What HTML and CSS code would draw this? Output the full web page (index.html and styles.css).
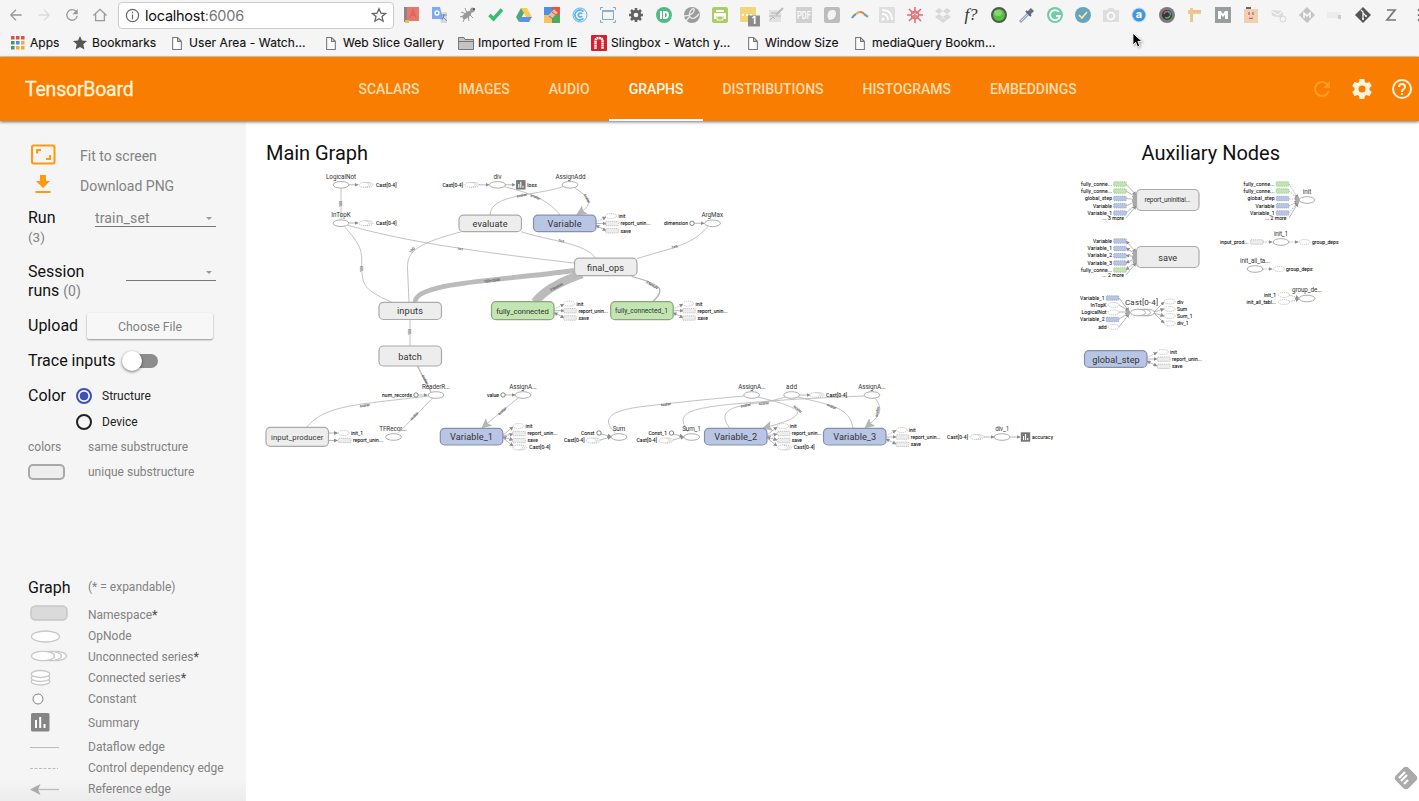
FILE: index.html
```html
<!DOCTYPE html>
<html lang="en">
<head>
<meta charset="utf-8">
<title>TensorBoard</title>
<link rel="stylesheet" href="styles.css">
</head>
<body>
<div class="browser">
  <div class="toolbar">
    <div class="nav-buttons">
      <svg class="nav-icon" viewBox="0 0 16 16"><path d="M14.500 8H2.500M8 2L2 8l6 6"/></svg>
      <svg class="nav-icon faded" viewBox="0 0 16 16"><path d="M1.500 8h12M8 2l6 6-6 6"/></svg>
      <svg class="nav-icon" viewBox="0 0 16 16"><path d="M13 4.500A6 6 0 1 0 14 9"/><path class="solid" d="M14.500 1v6h-6z"/></svg>
      <svg class="nav-icon" viewBox="0 0 16 16"><path d="M.5 8.500L8 1.500l7.500 7M3 7v7.500h10V7"/></svg>
    </div>
    <div class="address">
      <svg class="info" viewBox="0 0 16 16"><circle cx="8" cy="8" r="6.500"/><path d="M8 7v5M8 4v1.700"/></svg>
      <span class="url">localhost<span class="port">:6006</span></span>
      <svg class="star" viewBox="0 0 16 16"><path d="M8 1.700l1.900 4.400 4.700.4-3.600 3.100 1.100 4.600L8 11.700l-4.100 2.500L5 9.600 1.400 6.500l4.700-.4z"/></svg>
    </div>
    <div class="extensions">
      <svg viewBox="0 0 16 16"><path fill="#888" d="M0 0h4v15H0z"/><path fill="#e8776c" d="M3 0h12v14H3z"/><path fill="none" stroke="#d9655c" stroke-width="1.500" d="M6 11l3-8 3 8M7 8h4"/><path fill="#e9bf55" d="M1 13h4v3H1z"/></svg>
      <svg viewBox="0 0 16 16"><path fill="#d6d9dd" d="M7 5h8v11H9z"/><path fill="#7eaaf3" d="M0 0h8l3 12H0z"/><circle cx="5" cy="6" r="2" fill="none" stroke="#fff" stroke-width="1.300"/><path stroke="#7b93b4" d="M9 8h6M12 7v2l-2 4M11 10l4 4"/></svg>
      <svg viewBox="0 0 16 16"><g stroke="#999" fill="#9a9a9a"><path d="M1 5l5 2M5 1l2 5M7 5l6 6M0 10l6-2M3 15l3-7M8 8l1 6"/><ellipse cx="7" cy="8" rx="5" ry="2" transform="rotate(-40 7 8)"/><circle cx="12.500" cy="3" r="2"/></g><circle cx="14" cy="2" r="1" fill="#444"/></svg>
      <svg viewBox="0 0 16 16"><path fill="none" stroke="#36bd70" stroke-width="3.500" d="M1.500 8l4 4L14 2.500"/></svg>
      <svg viewBox="0 0 16 16"><path fill="#f5cf55" d="M5 1h6l5 9h-6z"/><path fill="#50a77b" d="M5 1l3 5-5 9-3-5z"/><path fill="#5c92e5" d="M5 10h11l-3 5H3z"/></svg>
      <svg viewBox="0 0 16 16"><path fill="#4f8fe5" d="M0 0h8v8H0z"/><path fill="#e85547" d="M8 0h8v8H8z"/><path fill="#f4c74e" d="M0 8h8v8H0z"/><path fill="#50a85c" d="M8 8h8v8H8z"/><path stroke="#e5bd9c" stroke-width="5" d="M4 12l8-8"/><path stroke="#9b6b55" d="M5 9l4 3M8 5l4 3"/></svg>
      <svg viewBox="0 0 16 16"><g fill="none" stroke="#60b3ed"><circle cx="8" cy="8" r="7" stroke-width="1"/><path stroke-width="1.800" d="M11.500 4.500a5 5 0 1 0 0 7M10 7a2 2 0 1 0 0 2"/></g></svg>
      <svg viewBox="0 0 16 16"><path fill="none" stroke="#7faaca" d="M2.500 4h11v8.500h-11zM.5 3V.500H3M13 .5h2.500V3M.5 13v2.500H3M13 15.500h2.500V13"/><path fill="#8cb2cf" d="M2 3h12v2H2z"/></svg>
      <svg viewBox="0 0 16 16"><g stroke="#626262" fill="none"><circle cx="8" cy="8" r="3.800" stroke-width="3"/><path stroke-width="2.600" d="M8 1v3M8 12v3M1 8h3M12 8h3M3 3l2 2M11 11l2 2M13 3l-2 2M5 11l-2 2"/></g></svg>
      <svg viewBox="0 0 16 16"><circle cx="8" cy="8" r="8" fill="#50bb83"/><path fill="#fff" d="M4 4h2v8H4zM7 4h2q4 0 4 4t-4 4H7z"/><path fill="#50bb83" d="M9 6q2 0 2 2t-2 2z"/></svg>
      <svg viewBox="0 0 16 16"><circle cx="8" cy="8" r="8" fill="#9c9c9c"/><path fill="none" stroke="#eee" stroke-width="1.300" d="M0 9C6 9 11 6 10 2 8 0 4 7 6 10c2 3 6 1 9-3M6 9l-4 5"/></svg>
      <svg viewBox="0 0 16 16"><rect width="16" height="16" rx="2" fill="#a9cf63"/><path fill="#fff" d="M4 3h8v2H4zM2 6h12v6h-2V9H4v3H2z"/><path fill="none" stroke="#fff" d="M5 9h6v4H5z"/></svg>
      <svg viewBox="0 0 16 16" class="with-badge"><rect width="16" height="15" rx="1" fill="#f1d779"/><path fill="#fff" d="M2 7h2v2H2zM6 7h2v2H6zM10 7h2v2h-2z"/><rect x="8" y="8.500" width="12" height="11" fill="#8b8b8b"/><text x="14" y="17.500" class="badge">1</text></svg>
      <svg viewBox="0 0 16 16"><path fill="#e2e2e2" d="M1 3h12v12H1z"/><path fill="none" stroke="#b8b8b8" d="M1 9h12M2 13l3-3 2 2M3 6h8"/><path stroke="#bbb" stroke-width="2" d="M8 8l7-7"/></svg>
      <svg viewBox="0 0 16 16"><rect width="16" height="16" fill="#d0d0d0"/><text x="8" y="12.500" class="pdf" textLength="14" lengthAdjust="spacingAndGlyphs">PDF</text></svg>
      <svg viewBox="0 0 16 16"><rect width="16" height="16" rx="2" fill="#bcbcbc"/><path fill="#f4f4f4" d="M5 4q7-3 7 3-1 6-7 6Q2 9 5 4z"/></svg>
      <svg viewBox="0 0 16 16"><g fill="none" stroke-width="2.200"><path stroke="#5a9fc0" d="M0 11q2-3 4-4"/><path stroke="#eea755" d="M4 7q2-2 4-2"/><path stroke="#df7b6d" d="M8 5q3 0 4 2"/><path stroke="#75aa91" d="M12 7l4 3"/></g></svg>
      <svg viewBox="0 0 16 16"><rect width="16" height="16" rx="1" fill="#dedede"/><g fill="none" stroke="#fff" stroke-width="1.800"><circle cx="4" cy="12" r=".7"/><path d="M3 7q6 0 6 6M3 3q10 0 10 10"/></g></svg>
      <svg viewBox="0 0 16 16"><g stroke="#e76871"><circle cx="8" cy="8" r="4" fill="#e98388"/><path stroke-width="1.500" d="M8 0v4M8 12v4M0 8h4M12 8h4M2 2l3 3M11 11l3 3M14 2l-3 3M5 11l-3 3"/><path stroke="#fff" d="M5 8l3-1 3 1"/></g></svg>
      <svg viewBox="0 0 16 16"><path fill="#d9d9d9" d="M4 1l4 3-4 3-4-3zM12 1l4 3-4 3-4-3zM4 7l4 3-4 3-4-3zM12 7l4 3-4 3-4-3zM8 11l4 2-4 3-4-3z"/></svg>
      <svg viewBox="0 0 16 16"><text x="8" y="13" class="f-mark">f?</text></svg>
      <svg viewBox="0 0 16 16"><circle cx="8" cy="8" r="7" fill="#54bf40" stroke="#555" stroke-width="2"/><ellipse cx="7" cy="6" rx="4" ry="3" fill="#83d770"/></svg>
      <svg viewBox="0 0 16 16"><path stroke="#8ba4d3" stroke-width="3" d="M1 15l8-8"/><path stroke="#ddd" d="M2 14l7-7"/><path stroke="#687184" stroke-width="4.500" d="M9.500 6.500l4-4"/><path stroke="#57617a" stroke-width="1.800" d="M7 4l5 5"/></svg>
      <svg viewBox="0 0 16 16"><circle cx="8" cy="8" r="8" fill="#71cda2"/><path fill="none" stroke="#fff" stroke-width="1.800" d="M12 5a5 5 0 1 0 1 4H9"/></svg>
      <svg viewBox="0 0 16 16"><circle cx="8" cy="8" r="8" fill="#6aa3bd"/><path fill="none" stroke="#f5e9a9" stroke-width="1.700" d="M4 8l3 3 5-6"/></svg>
      <svg viewBox="0 0 16 16"><path fill="#dedede" d="M0 3h4l2-2h4l2 2h4v12H0z"/><circle cx="8" cy="9" r="3.500" fill="none" stroke="#fff" stroke-width="1.600"/></svg>
      <svg viewBox="0 0 16 16"><circle cx="8" cy="8" r="7.500" fill="#c9e0f5"/><circle cx="8" cy="8" r="6.500" fill="#4495dc"/><text x="8" y="11.500" class="a-mark">a</text></svg>
      <svg viewBox="0 0 16 16"><circle cx="8" cy="8" r="8" fill="#7b7b7b"/><circle cx="8" cy="8" r="5" fill="#38343c"/><g fill="none" stroke-width="1.400"><path stroke="#c0626e" d="M5 7q1-3 4-2.500"/><path stroke="#54a0ae" d="M9 4.500q3 1 2.500 4"/><path stroke="#6aae54" d="M11 9q-2 3-5 1.500"/></g></svg>
      <svg viewBox="0 0 16 16"><path fill="#efc796" d="M3 1h3v14H3zM1 3h13v4H1z"/><path stroke="#d9b48c" d="M7 3v2M10 3v2M13 3v2M4 9h2M4 12h2"/></svg>
      <svg viewBox="0 0 16 16"><rect width="16" height="16" fill="#999d9e"/><path fill="#fff" d="M3 4h3l2 3 2-3h3v8h-3V8L8 10 6 8v4H3z"/></svg>
      <svg viewBox="0 0 16 16"><path fill="#f5ceb0" d="M1 2h14v14H1z"/><path fill="#66666e" d="M3 0h5v2H3z"/><path fill="none" stroke="#736262" d="M6 5v3M10 5v3M6 11q2 1 4 0"/></svg>
      <svg viewBox="0 0 16 16"><path fill="#ddd" d="M0 3l12 1v7L1 9z"/><path stroke="#fff" fill="none" d="M0 4l7 4 5-4"/><circle cx="12" cy="12" r="3" fill="#f5f5f5" stroke="#d5d5d5"/></svg>
      <svg viewBox="0 0 16 16"><path fill="#c4c4c4" d="M8 0l8 8-8 8-8-8z"/><path fill="none" stroke="#fff" stroke-width="1.400" d="M5 11V6l3 3 3-3v5"/></svg>
      <svg viewBox="0 0 16 16"><path fill="#ececec" d="M0 5h13v6H0z"/><rect x="11" y="8" width="3" height="4" fill="#ccc"/></svg>
      <svg viewBox="0 0 16 16"><path fill="#555" d="M8 0l8 8-8 8-8-8z"/><path fill="none" stroke="#fff" stroke-width="1.200" d="M6 3l2 2v7M8 6l3 3"/><circle cx="8" cy="12" r="1" fill="#fff"/><circle cx="11" cy="9" r="1" fill="#fff"/></svg>
      <svg viewBox="0 0 16 16"><path fill="none" stroke="#777" stroke-width="1.700" d="M4 3h8L4 13h9"/></svg>
      <svg viewBox="0 0 16 16"><g fill="#777"><circle cx="8" cy="3" r="1.300"/><circle cx="8" cy="8" r="1.300"/><circle cx="8" cy="13" r="1.300"/></g></svg>
    </div>
  </div>
  <div class="bookmarks">
    <span class="bookmark apps"><svg viewBox="0 0 14 14"><path fill="#dd5144" d="M0 0h3.500v3.500H0zM5 0h3.500v3.500H5zM10 0h3.500v3.500H10z"/><path fill="#449866" d="M0 5h3.500v3.500H0zM0 10h3.500v3.500H0z"/><path fill="#4b8bf4" d="M5 5h3.500v3.500H5z"/><path fill="#eeac38" d="M10 5h3.500v3.500H10zM10 10h3.500v3.500H10z"/><path fill="#eeac38" d="M5 10h3.500v3.500H5z"/></svg><b>Apps</b></span>
    <span class="bookmark starred"><svg viewBox="0 0 14 14"><path fill="#555" d="M7 0l2 4.500 5 .5-3.700 3.300 1.100 5.200L7 11l-4.400 2.500 1.100-5.200L0 5l5-.5z"/></svg><b>Bookmarks</b></span>
    <span class="bookmark user"><svg class="page" viewBox="0 0 9 12"><path d="M.5.500H5L8.500 4v7.500h-8zM5 .5V4h3.500"/></svg><b>User Area - Watch...</b></span>
    <span class="bookmark web"><svg class="page" viewBox="0 0 9 12"><path d="M.5.500H5L8.500 4v7.500h-8zM5 .5V4h3.500"/></svg><b>Web Slice Gallery</b></span>
    <span class="bookmark imported"><svg class="folder" viewBox="0 0 16 13"><path d="M.5 12.500V.500H6l1 2h8.500v10zM.5 4.500h15"/></svg><b>Imported From IE</b></span>
    <span class="bookmark sling"><svg class="slingbox" viewBox="0 0 16 16"><rect width="16" height="16" rx="1" fill="#d5202e"/><path fill="none" stroke="#fff" stroke-width="2.500" stroke-dasharray="1.800 .4" d="M4.500 14V6q0-3 3.500-3t3.500 3v8"/></svg><b>Slingbox - Watch y...</b></span>
    <span class="bookmark window"><svg class="page" viewBox="0 0 9 12"><path d="M.5.500H5L8.500 4v7.500h-8zM5 .5V4h3.500"/></svg><b>Window Size</b></span>
    <span class="bookmark media"><svg class="page" viewBox="0 0 9 12"><path d="M.5.500H5L8.500 4v7.500h-8zM5 .5V4h3.500"/></svg><b>mediaQuery Bookm...</b></span>
  </div>
  <svg class="cursor" viewBox="0 0 12 18"><path fill="#000" stroke="#fff" d="M1 1v13l3-3 2 5 2.500-1-2-5H11z"/></svg>
</div>

<header class="header">
  <div class="brand">TensorBoard</div>
  <nav class="tabs">
    <a class="tab">SCALARS</a><a class="tab">IMAGES</a><a class="tab">AUDIO</a><a class="tab active">GRAPHS</a><a class="tab">DISTRIBUTIONS</a><a class="tab">HISTOGRAMS</a><a class="tab">EMBEDDINGS</a>
  </nav>
  <div class="actions">
    <svg class="dim" viewBox="0 0 24 24"><path d="M17.650 6.350A7.960 7.960 0 0 0 12 4a8 8 0 1 0 7.730 10h-2.080A6 6 0 1 1 12 6c1.660 0 3.140.69 4.220 1.780L13 11h7V4z"/></svg>
    <svg viewBox="0 0 24 24"><path d="M19.430 12.980c.04-.32.070-.64.070-.98s-.03-.66-.07-.98l2.110-1.650c.19-.15.240-.42.120-.64l-2-3.460c-.12-.22-.39-.3-.61-.22l-2.490 1c-.52-.4-1.080-.73-1.690-.98l-.38-2.650A.488.488 0 0 0 14 2h-4c-.25 0-.46.180-.49.420l-.38 2.650c-.61.250-1.170.590-1.690.980l-2.490-1c-.23-.09-.49 0-.61.220l-2 3.460c-.13.220-.07.490.120.640l2.110 1.650c-.04.320-.07.650-.07.980s.03.660.070.980l-2.110 1.650c-.19.150-.24.420-.12.640l2 3.460c.12.220.390.300.610.220l2.490-1c.52.400 1.080.730 1.690.980l.38 2.650c.03.240.240.420.490.420h4c.25 0 .46-.18.490-.42l.38-2.650c.61-.25 1.170-.59 1.690-.98l2.490 1c.23.090.490 0 .61-.22l2-3.460c.12-.22.070-.49-.12-.64zM12 15.500A3.500 3.500 0 1 1 12 8.500a3.500 3.500 0 0 1 0 7z"/></svg>
    <svg viewBox="0 0 24 24"><path d="M11 18h2v-2h-2zm1-16a10 10 0 1 0 0 20 10 10 0 0 0 0-20zm0 18a8 8 0 1 1 0-16 8 8 0 0 1 0 16zm0-14a4 4 0 0 0-4 4h2a2 2 0 1 1 4 0c0 2-3 1.750-3 5h2c0-2.250 3-2.500 3-5a4 4 0 0 0-4-4z"/></svg>
  </div>
</header>

<main class="content">
  <aside class="sidebar">
    <div class="tool"><svg viewBox="0 0 26 22"><rect x="2" y="1.500" width="22.500" height="18" rx="1.500"/><path d="M7 9.500V6h4M20 11v4h-4"/></svg><span>Fit to screen</span></div>
    <div class="tool"><svg class="download" viewBox="0 0 26 22"><path d="M10 1h6v6h4L13 14 6 7h4zM5.500 17h15v2h-15z"/></svg><span>Download PNG</span></div>
    <div class="run">
      <div class="label">Run<small>(3)</small></div>
      <div class="select run-select"><span>train_set</span><i></i></div>
    </div>
    <div class="session">
      <div class="label">Session<br>runs <em>(0)</em></div>
      <div class="select session-select"><span></span><i></i></div>
    </div>
    <div class="upload"><span class="label">Upload</span><span class="choose">Choose File</span></div>
    <div class="trace"><span class="label">Trace inputs</span><span class="toggle"></span></div>
    <div class="color">
      <span class="label">Color</span>
      <div class="choices"><div class="choice"><i class="radio on"></i>Structure</div><div class="choice"><i class="radio"></i>Device</div></div>
    </div>
    <div class="substructure"><span class="key">colors</span><span>same substructure</span></div>
    <div class="substructure unique"><span class="key"><i class="swatch"></i></span><span>unique substructure</span></div>
    <div class="legend-title"><span class="label">Graph</span><span>(* = expandable)</span></div>
    <ul class="legend">
      <li><svg viewBox="0 0 60 20"><rect x="3" y="1" width="36" height="14" rx="4.500" fill="#dadada" stroke="#c6c6c6" stroke-width="1.500"/></svg>Namespace<b>*</b></li>
      <li><svg viewBox="0 0 60 20"><ellipse class="shape" cx="17.500" cy="10.500" rx="14" ry="5.500"/></svg>OpNode</li>
      <li><svg viewBox="0 0 60 20"><ellipse class="shape" cx="27" cy="9" rx="11.500" ry="4.700"/><ellipse class="shape" cx="22" cy="9" rx="11.500" ry="4.700"/><ellipse class="shape" cx="15" cy="9" rx="11.500" ry="4.700"/></svg>Unconnected series<b>*</b></li>
      <li><svg viewBox="0 0 60 20"><ellipse class="shape" cx="12.500" cy="13.500" rx="9.300" ry="3.500"/><ellipse class="shape" cx="12.500" cy="10" rx="9.300" ry="3.500"/><ellipse class="shape" cx="12.500" cy="6" rx="9.300" ry="3.500"/></svg>Connected series<b>*</b></li>
      <li><svg viewBox="0 0 60 20"><circle cx="10" cy="10" r="5" fill="#fff" stroke="#858585"/></svg>Constant</li>
      <li class="summary"><svg viewBox="0 0 60 20"><rect x="3" y="0" width="18.500" height="18.500" rx="1.500" fill="#858585"/><path fill="#fff" d="M7 7h2v8H7zM11.200 4h2v11h-2zM15.500 11h2v4h-2z"/></svg>Summary</li>
      <li class="dataflow"><svg viewBox="0 0 60 20"><path class="line" d="M2 10.500h29"/></svg>Dataflow edge</li>
      <li><svg viewBox="0 0 60 20"><path class="line dashed" d="M2 10.500h28"/></svg>Control dependency edge</li>
      <li><svg viewBox="0 0 60 20"><path class="line thick" d="M8 10.500h23"/><path fill="#aaa" d="M2 10.500L12.500 5 10 10.500 12.500 16z"/></svg>Reference edge</li>
    </ul>
  </aside>

  <section class="canvas">
  <svg class="graph" viewBox="246 121 1173 680">
    <defs>
      <marker id="arrow" viewBox="0 0 4 4" refX="3.500" refY="2" markerWidth="4" markerHeight="4" markerUnits="userSpaceOnUse" orient="auto-start-reverse"><path d="M0 0l4 2-4 2z" fill="#8c8c8c"/></marker>
      <marker id="ref" viewBox="0 0 10 10" refX="8" refY="5" markerWidth="10" markerHeight="10" markerUnits="userSpaceOnUse" orient="auto"><path d="M0 0l10 5-10 5 2-5z" fill="#b5b5b5"/></marker>
      <g id="op"><ellipse rx="7.900" ry="3.300"/></g>
      <g id="dot"><circle r="2.200"/></g>
      <g id="a-op"><ellipse rx="5.500" ry="2.500"/></g>
      <g id="a-ns"><rect x="-6.300" y="-2.200" width="12.600" height="4.400" rx=".7"/></g>
      <g id="a-series"><ellipse cx="2" rx="5" ry="2.400"/><ellipse cx="0" rx="5" ry="2.400"/><ellipse cx="-2" rx="5" ry="2.400"/></g>
      <g id="summary"><rect x="-4.700" y="-4.700" width="9.400" height="9.400" fill="#777"/><path d="M-2 3v-4M0 3v-6M2.200 3V1" stroke="#fff" stroke-width="1.100"/></g>
      <g id="outs3"><path d="M0-1.500L10-6.500" stroke-dasharray="1.200 .8" marker-end="url(#arrow)"/><path d="M0 0h10" marker-end="url(#arrow)"/><path d="M0 2l10 5" marker-start="url(#arrow)" marker-end="url(#arrow)"/></g>
    </defs>

    <text class="title" x="266" y="160" textLength="102">Main Graph</text>
    <text class="title" x="1141.500" y="160" textLength="138.500">Auxiliary Nodes</text>

    <g class="edges">
      <path d="M341 188v31"/>
      <path d="M344.300 226.500C357 241 361.700 247 361.700 260C361.700 285 362 289 391.500 302"/>
      <path d="M348 225.300C400 240 460 250 574 263"/>
      <path d="M461.500 231.700C410 245 407.500 255 407.500 268L409 302"/>
      <path d="M504.300 186.700C535 194 550 202 560 215"/>
      <path d="M563 186.700C535 196 490 194 490.300 215"/>
      <path d="M521 231.700C550 241 585 243 595.500 258"/>
      <path d="M708 226.500C692 244 680 246 637 258.500"/>
      <path d="M410 319.500V346"/>
      <path d="M417.500 366L431 392" stroke-width="1.300"/>
      <path d="M306.700 427.300C325 405 355 405 428.500 396"/>
      <path d="M432.700 398L398.300 433"/>
      <path d="M615.500 433C605 423 600 411 647 406C680 402 710 399 744 396"/>
      <path d="M688 432C677 415 680 408 746 403C790 399 820 398 864 396"/>
      <path d="M785 397C758 407 710 401 729.500 428"/>
      <path d="M798 397C833 406 849 407 853 428"/>
      <path stroke-width="1.200" d="M631.700 276.500C664 285 665 290 652.500 302"/>
      <path class="heavy" stroke-width="4.800" d="M574 270.500C500 281 416 282 415 302"/>
      <path class="heavy" stroke-width="8.500" d="M582 274C562 281 544 290 535 302"/>
      <path class="reference" d="M575 188C593 200 592 205 578 214"/>
      <path class="reference" d="M518 398L483 427"/>
      <path class="reference" d="M758 397C802 408 816 414 764 428"/>
      <path class="reference" d="M875 398C884 410 880 416 866 427"/>
    </g>

    <g class="arrows">
      <path d="M349 184.800h9"/><path d="M349 223h9"/><path d="M478 184.800h11"/><path d="M505 184.800h10"/><path d="M694 223.300h10"/><path d="M418 395h9"/><path d="M505 395h10"/><path d="M800 395h10"/><path d="M984 437h10"/><path d="M1010 437h10"/>
      <path d="M601 434l10 2.500"/><path d="M600 440l11-3"/><path d="M673 434l10 2.500"/><path d="M673 440l11-3"/><path d="M328.500 433h9"/><path d="M328.500 440.500h9"/>
      <use href="#outs3" x="596" y="223.500"/><use href="#outs3" x="554" y="310.700"/><use href="#outs3" x="673" y="310.700"/><use href="#outs3" x="886" y="437"/><use href="#outs3" x="1147" y="359"/>
      <path d="M503 435l10-8"/><path d="M503 436l10-2"/><path class="both" d="M503 437l10 3"/><path d="M503 438l10 8"/><path d="M767 435l10-8"/><path d="M767 436l10-2"/><path class="both" d="M767 437l10 3"/><path d="M767 438l10 8"/>
      <path d="M1126 184l10 11"/><path d="M1126 191l10 6"/><path d="M1126 198.500l10 1"/><path d="M1126 206l10-5"/><path d="M1126 213l10-9"/><path d="M1126 218l10-12"/>
      <path class="both" d="M1126 241l10 11"/><path class="both" d="M1126 248l10 6"/><path class="both" d="M1126 255.500l10 1"/><path class="both" d="M1126 263l10-5"/><path class="both" d="M1126 270l10-9"/><path d="M1126 275l10-12"/>
      <path d="M1119 298l10 13"/><path d="M1119 305l10 6"/><path d="M1119 312h10"/><path d="M1119 319l10-6"/><path d="M1119 327l10-13"/>
      <path d="M1154 312l10-10"/><path d="M1154 312l10-3"/><path d="M1154 313l10 3"/><path d="M1154 313l10 10"/>
      <g class="control"><path d="M1289 184l9 14"/><path d="M1289 191l9 8"/><path d="M1289 199h9"/><path d="M1289 206l9-5"/><path d="M1289 213l9-11"/><path d="M1263 242h9"/><path d="M1289 242h9"/><path d="M1263 269h9"/><path d="M1289 295l10 3"/><path d="M1289 302l10-3"/></g>
      <path d="M1289 218l9-15"/>
    </g>
    <g fill="#aaa"><ellipse cx="1134.500" cy="200" rx="1.800" ry="7"/><ellipse cx="1134.500" cy="257" rx="1.800" ry="7"/><ellipse cx="1128" cy="312.500" rx="2" ry="3"/><ellipse cx="1297.500" cy="200" rx="2" ry="4"/></g>

    <g class="ops">
      <use href="#op" x="341" y="184.800"/><use href="#op" x="341" y="223.200"/><use href="#op" x="497.500" y="184.800"/><use href="#op" x="570" y="184.800"/><use href="#op" x="712.500" y="223.300"/>
      <use href="#op" x="436" y="395"/><use href="#op" x="393.500" y="437"/><use href="#op" x="523" y="395"/><use href="#op" x="619" y="437"/><use href="#op" x="691.700" y="437"/><use href="#op" x="751.700" y="395"/><use href="#op" x="791.700" y="395"/><use href="#op" x="872" y="395"/><use href="#op" x="1002" y="437"/>
      <use href="#op" x="1307" y="200"/><use href="#op" x="1281" y="242"/><use href="#op" x="1255" y="269"/><use href="#op" x="1307" y="298.500"/>
      <ellipse cx="1147" cy="312.500" rx="7.500" ry="3.300"/><ellipse cx="1143" cy="312.500" rx="7.500" ry="3.300"/><ellipse cx="1138" cy="312.500" rx="7.500" ry="3.300"/>
    </g>
    <g class="dots"><use href="#dot" x="692" y="223.300"/><use href="#dot" x="416" y="395"/><use href="#dot" x="503" y="395"/><use href="#dot" x="599" y="433"/><use href="#dot" x="671.500" y="433"/></g>
    <use href="#summary" x="520.800" y="184.800"/><use href="#summary" x="1025.500" y="437"/>

    <g class="annotations">
      <use href="#a-series" x="366" y="184.800"/><use href="#a-series" x="366" y="223.200"/><use href="#a-series" x="472" y="184.800"/><use href="#a-series" x="593" y="440.500"/><use href="#a-series" x="666" y="440.500"/><use href="#a-series" x="519.500" y="447.500"/><use href="#a-series" x="784.500" y="447.500"/><use href="#a-series" x="817" y="395"/><use href="#a-series" x="977" y="437"/>
      <use href="#a-op" x="611" y="216"/><use href="#a-op" x="569" y="303.700"/><use href="#a-op" x="688" y="303.700"/><use href="#a-op" x="343.700" y="433"/><use href="#a-op" x="518.500" y="426"/><use href="#a-op" x="783" y="426"/><use href="#a-op" x="901.700" y="430"/><use href="#a-op" x="1162.700" y="352"/>
      <use href="#a-op" x="1113.500" y="305"/><use href="#a-op" x="1113.500" y="312.500"/><use href="#a-op" x="1113.500" y="327"/>
      <use href="#a-op" x="1169.700" y="301.500"/><use href="#a-op" x="1169.700" y="309"/><use href="#a-op" x="1169.700" y="316"/><use href="#a-op" x="1169.700" y="323.500"/>
      <use href="#a-op" x="1304.500" y="242"/><use href="#a-op" x="1279" y="269"/><use href="#a-op" x="1284" y="295"/><use href="#a-op" x="1284" y="302"/>
      <g class="unique-ns"><use href="#a-ns" x="612" y="223.500"/><use href="#a-ns" x="612" y="230.800"/><use href="#a-ns" x="570" y="310.700"/><use href="#a-ns" x="570" y="318"/><use href="#a-ns" x="689" y="310.700"/><use href="#a-ns" x="689" y="318"/><use href="#a-ns" x="344.700" y="440.500"/><use href="#a-ns" x="519" y="433.500"/><use href="#a-ns" x="519" y="440.500"/><use href="#a-ns" x="783.700" y="433.500"/><use href="#a-ns" x="783.700" y="440.500"/><use href="#a-ns" x="902.500" y="437"/><use href="#a-ns" x="902.500" y="444.300"/><use href="#a-ns" x="1163.700" y="359.200"/><use href="#a-ns" x="1163.700" y="366.300"/><use href="#a-ns" x="1256.700" y="242"/></g>
      <g class="same-green"><use href="#a-ns" x="1120" y="184"/><use href="#a-ns" x="1120" y="191"/><use href="#a-ns" x="1282.500" y="184"/><use href="#a-ns" x="1282.500" y="191"/><use href="#a-ns" x="1120" y="270"/></g>
      <g class="same-blue"><use href="#a-ns" x="1120" y="198.500"/><use href="#a-ns" x="1120" y="205.800"/><use href="#a-ns" x="1120" y="213"/><use href="#a-ns" x="1282.500" y="198.500"/><use href="#a-ns" x="1282.500" y="205.800"/><use href="#a-ns" x="1282.500" y="213"/><use href="#a-ns" x="1120" y="241"/><use href="#a-ns" x="1120" y="248.500"/><use href="#a-ns" x="1120" y="255.700"/><use href="#a-ns" x="1120" y="263"/><use href="#a-ns" x="1112.500" y="298"/><use href="#a-ns" x="1112.500" y="319.500"/></g>
    </g>

    <g class="names">
      <text x="341" y="178.700" textLength="30">LogicalNot</text><text x="341" y="217" textLength="19.500">InTopK</text><text x="497.500" y="178.700" textLength="8">div</text><text x="570.500" y="178.700" textLength="30">AssignAdd</text><text x="712.300" y="217" textLength="21.500">ArgMax</text>
      <text x="436" y="389.200" textLength="28">ReaderR...</text><text x="393" y="431" textLength="27.500">TFRecor...</text><text x="523" y="389.200" textLength="27.500">AssignA...</text><text x="619" y="431" textLength="12.500">Sum</text><text x="691.500" y="431" textLength="18.500">Sum_1</text><text x="752" y="389.200" textLength="27.500">AssignA...</text><text x="791.500" y="389.200" textLength="11">add</text><text x="872" y="389.200" textLength="27.500">AssignA...</text><text x="1002.300" y="431" textLength="14">div_1</text>
      <text x="1307" y="194" textLength="8.500">init</text><text x="1281" y="236" textLength="14">init_1</text><text x="1255" y="262.700" textLength="30">init_all_ta...</text><text x="1307" y="292.300" textLength="30">group_de...</text>
      <text x="1141.500" y="305" textLength="33" class="series-name">Cast[0-4]</text>
    </g>

    <g class="namespaces">
      <rect x="459" y="215.200" width="62.500" height="16.500" rx="4.500"/><rect x="574.500" y="258.200" width="62.500" height="17.500" rx="4.500"/><rect x="379" y="302.300" width="62.500" height="17.200" rx="4.500"/><rect x="379" y="346" width="62.500" height="20" rx="4.500"/><rect x="266" y="427.300" width="62.500" height="19" rx="4.500"/><rect x="1136.500" y="189.500" width="62.500" height="21" rx="4.500"/><rect x="1136.500" y="246.500" width="62.500" height="21" rx="4.500"/>
      <g class="blue"><rect x="533.500" y="215.200" width="62.500" height="16.500" rx="4.500"/><rect x="440.300" y="428.300" width="62.500" height="16.700" rx="4.500"/><rect x="704.500" y="428.300" width="62.500" height="16.700" rx="4.500"/><rect x="823.500" y="428.300" width="62.500" height="16.700" rx="4.500"/><rect x="1084.500" y="350.700" width="62.500" height="16.700" rx="4.500"/></g>
      <g class="green"><rect x="491.500" y="301.700" width="62.500" height="18" rx="4.500"/><rect x="610.700" y="301.700" width="62.500" height="18" rx="4.500"/></g>
    </g>
    <g class="namespace-names">
      <text x="490" y="226.700" textLength="35">evaluate</text><text x="564.500" y="226.700" textLength="34">Variable</text><text x="605.500" y="270.500" textLength="37">final_ops</text><text x="410" y="314.200" textLength="26">inputs</text><text x="410" y="359.500" textLength="23.500">batch</text><text x="1167.700" y="260.500" textLength="19">save</text><text x="471.500" y="440.200" textLength="43">Variable_1</text><text x="735.700" y="440.200" textLength="43">Variable_2</text><text x="854.700" y="440.200" textLength="43">Variable_3</text><text x="1116" y="362.500" textLength="47.500">global_step</text>
      <g class="long"><text x="297.200" y="439.500" textLength="52.500">input_producer</text><text x="522.500" y="313.500" textLength="52.500">fully_connected</text><text class="longer" x="641.500" y="313.300" textLength="53">fully_connected_1</text><text class="longer" x="1167.500" y="202.300" textLength="46">report_uninitial...</text></g>
    </g>

    <g class="notes">
      <text x="376" y="186.600" textLength="20.500">Cast[0-4]</text><text x="376" y="225" textLength="20.500">Cast[0-4]</text><text x="442.500" y="186.600" textLength="20.500">Cast[0-4]</text><text x="527.300" y="186.600" textLength="9.500">loss</text>
      <text x="618.500" y="218">init</text><text x="620.500" y="225.300" textLength="30">report_unin...</text><text x="620.500" y="232.600">save</text><text x="664" y="225" textLength="24">dimension</text>
      <text x="576.500" y="305.700">init</text><text x="578.500" y="312.700" textLength="29.500">report_unin...</text><text x="578.500" y="320">save</text><text x="695.500" y="305.700">init</text><text x="697.500" y="312.700" textLength="30">report_unin...</text><text x="697.500" y="320">save</text>
      <text x="382" y="397" textLength="30">num_records</text><text x="487" y="397" textLength="12">value</text><text x="351" y="435" textLength="12">init_1</text><text x="353" y="442.300" textLength="30">report_unin...</text>
      <text x="525.500" y="428">init</text><text x="527.500" y="435.300" textLength="30">report_unin...</text><text x="527.500" y="442.300">save</text><text x="529.300" y="449.300" textLength="21">Cast[0-4]</text>
      <text x="581" y="435" textLength="13.500">Const</text><text x="564" y="442.300" textLength="20.500">Cast[0-4]</text><text x="648.500" y="435" textLength="18.500">Const_1</text><text x="636.500" y="442.300" textLength="20.500">Cast[0-4]</text>
      <text x="789.700" y="428">init</text><text x="791.700" y="435.300" textLength="30">report_unin...</text><text x="791.700" y="442.300">save</text><text x="793.700" y="449.300" textLength="21">Cast[0-4]</text><text x="826" y="396.700" textLength="21">Cast[0-4]</text>
      <text x="908.700" y="431.800">init</text><text x="910.700" y="438.800" textLength="30">report_unin...</text><text x="910.700" y="446.100">save</text><text x="947" y="438.800" textLength="21">Cast[0-4]</text><text x="1032" y="438.800" textLength="21">accuracy</text>
      <text x="1170" y="353.800">init</text><text x="1172" y="361" textLength="30">report_unin...</text><text x="1172" y="368">save</text>
      <text x="1177" y="303.500">div</text><text x="1177" y="310.800">Sum</text><text x="1177" y="317.900" textLength="15.500">Sum_1</text><text x="1177" y="325.300">div_1</text>
      <text x="1312" y="243.800" textLength="26.500">group_deps</text><text x="1286" y="270.800" textLength="26.500">group_deps</text>
      <g class="right">
        <text x="1112" y="185.700" textLength="31">fully_conne...</text><text x="1112" y="192.900" textLength="31">fully_conne...</text><text x="1112" y="200.300" textLength="27">global_step</text><text x="1112" y="207.600" textLength="19">Variable</text><text x="1112" y="214.700" textLength="24.500">Variable_1</text><text x="1124" y="220" textLength="21.500">... 3 more</text>
        <text x="1112" y="242.700" textLength="19">Variable</text><text x="1112" y="250.100" textLength="24.500">Variable_1</text><text x="1112" y="257.300" textLength="24.500">Variable_2</text><text x="1112" y="264.600" textLength="24.500">Variable_3</text><text x="1112" y="271.900" textLength="31">fully_conne...</text><text x="1124" y="277" textLength="21.500">... 2 more</text>
        <text x="1104.500" y="299.700" textLength="24.500">Variable_1</text><text x="1106.500" y="307" textLength="16">InTopK</text><text x="1106.500" y="314.300" textLength="25">LogicalNot</text><text x="1104.500" y="321.300" textLength="24.500">Variable_2</text><text x="1106.500" y="328.600">add</text>
        <text x="1274.500" y="185.700" textLength="31">fully_conne...</text><text x="1274.500" y="192.900" textLength="31">fully_conne...</text><text x="1274.500" y="200.300" textLength="27">global_step</text><text x="1274.500" y="207.600" textLength="19">Variable</text><text x="1274.500" y="214.700" textLength="24.500">Variable_1</text><text x="1286.500" y="220" textLength="21.500">... 2 more</text>
        <text x="1248.500" y="243.800" textLength="28.500">input_prod...</text><text x="1276" y="296.800" textLength="12">init_1</text><text x="1276" y="304" textLength="29.500">init_all_tabl...</text>
      </g>
    </g>

    <g class="edge-labels">
      <text transform="translate(342.200 204) rotate(-90)">100</text><text transform="translate(363 269) rotate(-90)">100</text><text transform="translate(413 251) rotate(-50)">100</text><text transform="translate(411.200 332) rotate(-90)">100</text>
      <text transform="translate(460 250.500) rotate(8)">?×?</text><text transform="translate(561 242.500) rotate(14)">?×?</text><text transform="translate(675 248) rotate(-18)">1×6</text>
      <text transform="translate(492 281.800) rotate(-7)" textLength="16">100×2048</text><text transform="translate(557 288) rotate(-28)" textLength="14">2 tensors</text><text transform="translate(651.500 286) rotate(30)" textLength="13">2 tensors</text>
      <text transform="translate(522 196.500) rotate(-12)">scalar</text><text transform="translate(535 198) rotate(22)">scalar</text><text transform="translate(586 199) rotate(62)">scalar</text>
      <text transform="translate(424 380) rotate(62)">scalar</text><text transform="translate(365 406.500) rotate(-8)">scalar</text><text transform="translate(415 417) rotate(-44)">scalar</text><text transform="translate(503 412) rotate(-40)">scalar</text>
      <text transform="translate(666 405.500) rotate(-7)">scalar</text><text transform="translate(746 406.500) rotate(-12)">scalar</text><text transform="translate(764 404.500) rotate(-5)">scalar</text><text transform="translate(797 410) rotate(40)">scalar</text><text transform="translate(831 407.500) rotate(24)">scalar</text><text transform="translate(878.500 412) rotate(-78)">scalar</text>
    </g>
    <g transform="translate(1406 778)"><rect x="-9" y="-9" width="18" height="18" rx="4" transform="rotate(45)" fill="#aaa"/><path d="M-7 0l6-6M-5 3l6-6M-2 6l4-4" fill="none" stroke="#fff" stroke-width="2.200"/></g>
  </svg>
  </section>
</main>
</body>
</html>
```
FILE: styles.css
```css
* { box-sizing: border-box; }
body { margin: 0; width: 1419px; height: 801px; overflow: hidden; background: #fff; font-family: Roboto, sans-serif; display: flex; flex-direction: column; }

.browser { position: relative; height: 57px; flex: none; overflow: hidden; background: #f5f5f5; border-bottom: 1px solid #d9d2ca; font-family: Inter, sans-serif; }
.toolbar { display: flex; height: 30px; align-items: center; padding-left: 9px; }
.nav-buttons { display: flex; flex: none; gap: 14px; width: 109px; }
.nav-icon { width: 14px; height: 14px; overflow: visible; fill: none; stroke: #999; stroke-width: 1.5; }
.nav-icon .solid { fill: #999; stroke: none; }
.nav-icon.faded { stroke: #dcdcdc; }
.address { display: flex; align-items: center; flex: none; width: 276px; height: 27px; padding: 0 6px; background: #fff; border: 1px solid #ccc; border-radius: 4px; }
.info, .star { width: 15px; height: 15px; fill: none; stroke: #666; stroke-width: 1.3; }
.star { margin-left: auto; width: 16px; height: 16px; }
.url { margin-left: 5px; padding-top: 1px; font-size: 14.5px; line-height: 20px; color: #111; letter-spacing: -.25px; }
.port { color: #777; }
.extensions { display: flex; flex: none; gap: 12px; margin-left: 10px; }
.extensions svg { width: 15.97px; height: 16px; flex: none; overflow: visible; }
.badge { font: 700 10px Inter, sans-serif; fill: #fff; text-anchor: middle; }
.pdf { font: 500 11px Roboto, sans-serif; fill: #fff; text-anchor: middle; }
.f-mark { font: italic 17px "Liberation Serif", serif; fill: #333; text-anchor: middle; }
.a-mark { font: 700 11px Inter, sans-serif; fill: #fff; text-anchor: middle; }
.bookmarks { display: flex; height: 26px; align-items: center; padding-left: 11px; }
.bookmark { display: flex; align-items: center; flex: none; white-space: nowrap; color: #111; }
.bookmark svg { width: 14px; height: 14px; flex: none; }
.bookmark svg.page { width: 10px; height: 13px; margin-right: 2px; }
.bookmark svg.folder { width: 16px; height: 13px; }
.bookmark svg.slingbox { width: 16px; height: 16px; }
.bookmark b { font-size: 12px; line-height: 16px; font-weight: 400; margin-left: 5px; -webkit-text-stroke: .15px #111; }
.bookmark.user b, .bookmark.web b { letter-spacing: .08px; }
.bookmark.starred b { letter-spacing: .06px; }
.bookmark.sling b { letter-spacing: .13px; margin-left: 4px; }
.bookmark.imported b { margin-left: 4px; letter-spacing: .15px; }
.bookmark.media b { letter-spacing: .06px; }
.page { fill: #fff; stroke: #777; }
.folder { fill: #c4c4c4; stroke: #777; }
.apps { width: 62px; } .starred { width: 99px; } .user { width: 154px; } .web { width: 132px; } .imported { width: 133px; } .sling { width: 157px; } .window { width: 107px; }
.cursor { position: absolute; left: 1132px; top: 32px; width: 11px; height: 17px; filter: drop-shadow(1px 1px 1px #aaa); }

.header { position: relative; z-index: 1; display: flex; align-items: center; height: 64px; flex: none; background: #f97d00; box-shadow: 0 1px 3px rgba(0, 0, 0, .55); color: #fff; }
.brand { width: 339px; padding: 1px 0 0 25px; font-size: 19.5px; line-height: 28px; letter-spacing: -.22px; color: #fff4dd; -webkit-text-stroke: .3px #fff4dd; }
.tabs { display: flex; height: 64px; }
.tab { display: flex; align-items: center; justify-content: center; padding: 0 19.5px; font-size: 14px; font-weight: 500; letter-spacing: -.03px; color: #ffdcae; border-bottom: 2px solid transparent; border-top: 2px solid transparent; }
.tab.active { color: #fff8e8; border-bottom-color: #fff; }
.actions { display: flex; gap: 16px; margin-left: auto; margin-right: 5px; }
.actions svg { width: 24px; height: 24px; fill: #fff4dc; }
.actions .dim { fill: #ff9c24; }

.content { display: flex; flex: 1; min-height: 0; }
.sidebar { width: 246px; flex: none; padding: 19px 0 0 28px; overflow: hidden; background: linear-gradient(#f5f5f5 97%, #ececec); color: #828282; font-size: 12px; }
.label { color: #111; font-size: 16px; line-height: 20px; }
.tool { display: flex; align-items: center; height: 30px; font-size: 14px; }
.tool svg { width: 26px; height: 22px; margin: 0 23px 0 2px; fill: none; stroke: #ff9910; stroke-width: 2; }
.tool svg.download { fill: #ff9910; stroke: none; }
.tool span { margin-left: 1px; padding-top: 1px; }
.run { display: flex; height: 54px; padding-top: 8px; }
.run .label { width: 67px; }
.run small { display: block; font-size: 13.5px; line-height: 19px; color: #828282; }
.select { display: flex; justify-content: space-between; align-items: center; height: 19px; border-bottom: 1px solid #777; font-size: 14px; letter-spacing: .15px; }
.select span { padding-top: 2px; }
.select i { border: 3.5px solid transparent; border-top-color: #999; border-bottom: 0; margin: 2px 4px 0 0; }
.run-select { width: 121px; }
.session { display: flex; height: 54px; padding-top: 8px; }
.session .label { width: 98px; line-height: 19px; }
.session em { font-style: normal; font-size: 14px; color: #828282; }
.session-select { width: 90px; }
.upload { display: flex; align-items: center; height: 35px; gap: 9px; }
.choose { width: 126px; height: 26px; line-height: 29px; text-align: center; font-size: 12.3px; border-radius: 2px; background: #f7f7f7; box-shadow: 0 1px 2px rgba(0, 0, 0, .4); }
.trace { display: flex; align-items: center; height: 36px; gap: 8px; }
.toggle { position: relative; width: 34px; height: 14px; border-radius: 7px; background: #8c8c8c; }
.toggle::before { content: ""; position: absolute; left: -2px; top: -3px; width: 20px; height: 20px; border-radius: 50%; background: #fff; box-shadow: 0 1px 3px rgba(0, 0, 0, .55); }
.color { display: flex; height: 55px; padding-top: 7px; }
.color .label { width: 48px; }
.choice { display: flex; align-items: center; gap: 10px; height: 20px; margin-bottom: 6px; color: #222; font-size: 12px; }
.radio { width: 16px; height: 16px; border: 2px solid #222; border-radius: 50%; }
.radio.on { border-color: #3f51b5; background: radial-gradient(#3f51b5 0 4px, transparent 4.7px); }
.substructure { display: flex; align-items: center; height: 25px; }
.key { width: 60px; }
.swatch { display: block; width: 37px; height: 16px; border: 2px solid #a9a9a9; border-radius: 5px; background: #eee; }
.legend-title { display: flex; align-items: center; height: 24px; margin-top: 91px; }
.legend-title .label { width: 60px; padding-top: 1px; }
.legend { list-style: none; margin: 5px 0 0; padding: 0; }
.legend li { display: flex; align-items: center; height: 21px; white-space: nowrap; }
.legend b { color: #555; }
.legend svg { width: 60px; height: 20px; overflow: visible; flex: none; }
.legend .summary { height: 27px; }
.legend .dataflow { height: 21px; }
.shape { fill: #fff; stroke: #c8c8c8; stroke-width: 1.3; }
.line { stroke: #bbb; }
.dashed { stroke-dasharray: 3 1.5; }
.thick { stroke-width: 1.3; }

.canvas { flex: 1; background: #fff; }
.graph { display: block; width: 1173px; height: 680px; font-family: Roboto, sans-serif; }
.title { font-size: 20px; fill: #111; }
.edges { fill: none; stroke: #b3b3b3; stroke-width: .8; }
.edges .heavy { stroke: #bbb; }
.edges .reference { marker-end: url(#ref); }
.arrows { fill: none; stroke: #999; stroke-width: .7; }
.arrows > path, .arrows > g > path { marker-end: url(#arrow); }
.arrows .both { marker-start: url(#arrow); }
.control { stroke-dasharray: 1.5 1; }
.ops { fill: #fff; stroke: #a5a5a5; stroke-width: .9; }
.dots { fill: #fff; stroke: #777; stroke-width: .9; }
.annotations { fill: #fff; stroke: #aaa; stroke-width: .7; stroke-dasharray: 1.1 .8; }
.unique-ns { fill: #ededed; }
.same-green { fill: #c2e5b2; stroke: #86b873; }
.same-blue { fill: #b9c5e4; stroke: #8793bb; }
.names { font-size: 6.3px; text-anchor: middle; fill: #333; }
.names .series-name { font-size: 8px; }
.namespaces { fill: #ededed; stroke: #aaa; stroke-width: 1.2; }
.namespaces .blue { fill: #b9c5e4; stroke: #8590ad; }
.namespaces .green { fill: #c2e5b2; stroke: #88a77a; }
.namespace-names { font-size: 9.2px; text-anchor: middle; fill: #333; }
.namespace-names .long { font-size: 7.7px; }
.namespace-names .longer { font-size: 6.7px; }
.notes { font-size: 5px; fill: #222; stroke: #222; stroke-width: .1; }
.notes .right { text-anchor: end; }
.edge-labels { font-size: 3.7px; text-anchor: middle; fill: #555; stroke: #777; stroke-width: .15; }
```
